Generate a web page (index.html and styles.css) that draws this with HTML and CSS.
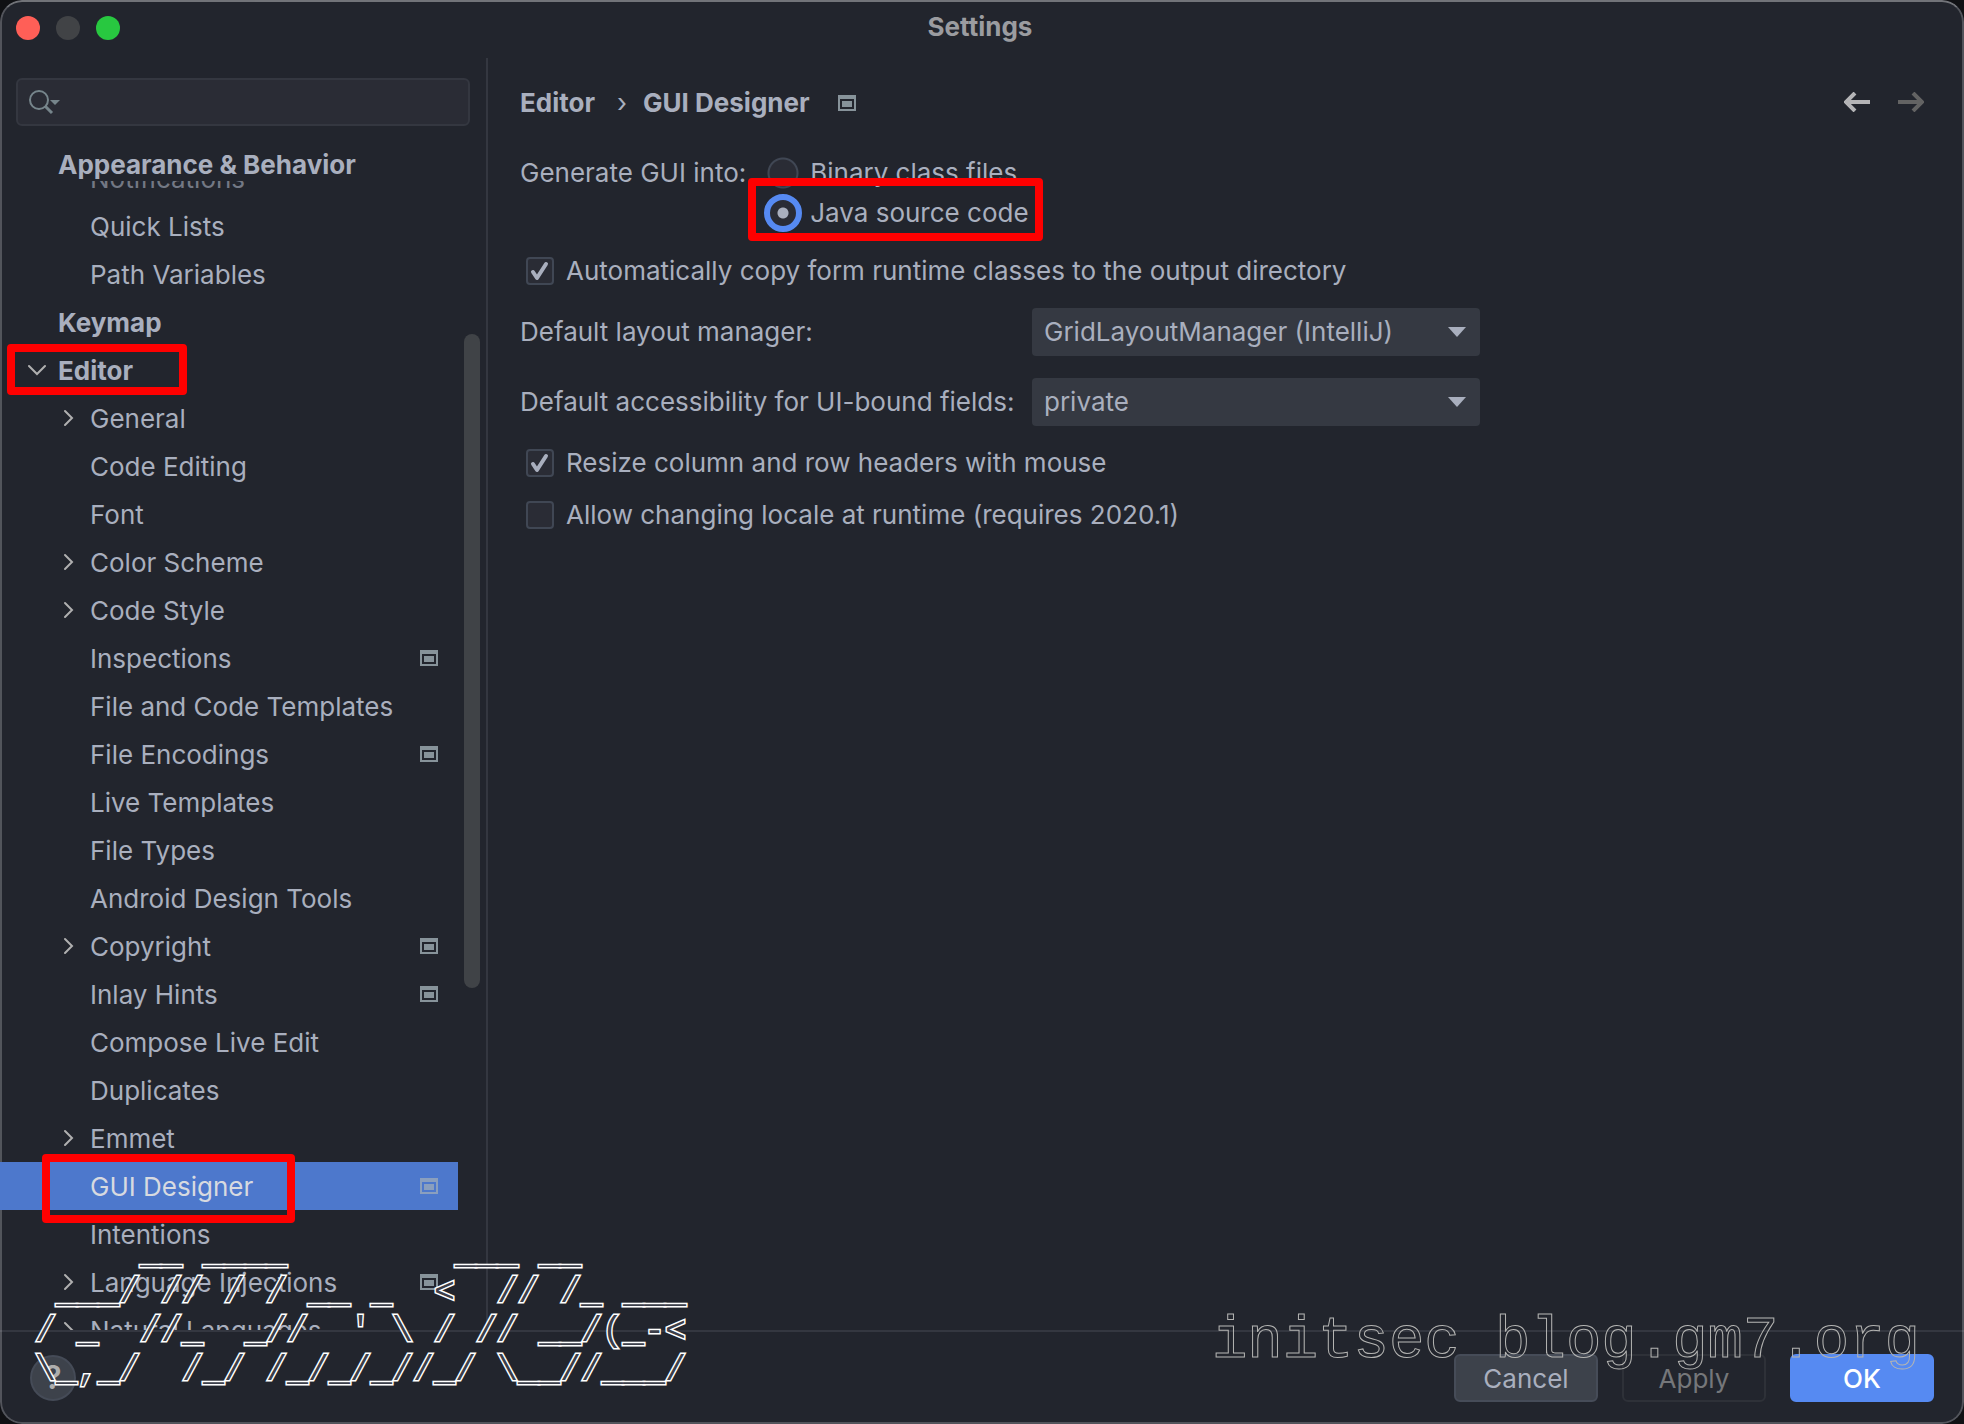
FILE: index.html
```html
<!DOCTYPE html>
<html lang="en">
<head>
<meta charset="utf-8">
<title>Settings</title>
<link rel="stylesheet" href="styles.css">
</head>
<body>
<svg class="defs" aria-hidden="true">
  <symbol id="right" viewBox="0 0 18 18"><path d="M5 2l7 7-7 7" fill="none" stroke="currentColor" stroke-width="2" stroke-linecap="round"/></symbol>
  <symbol id="down" viewBox="0 0 18 18"><path d="M1 5l8 8 8-8" fill="none" stroke="currentColor" stroke-width="2" stroke-linecap="round"/></symbol>
  <symbol id="project" viewBox="0 0 18 16"><path d="M0 0h18v16H0zM2 4v10h14V4zM4 6h10v6H4z" fill="currentColor" fill-rule="evenodd"/></symbol>
  <symbol id="check" viewBox="0 0 28 28"><path d="M7 15l4 6L20 7" fill="none" stroke="currentColor" stroke-width="4" stroke-linecap="round" stroke-linejoin="round"/></symbol>
  <symbol id="triangle" viewBox="0 0 18 10"><path d="M0 0h18l-9 10z" fill="currentColor"/></symbol>
  <symbol id="arrow" viewBox="0 0 26 20"><path d="M26 10H3M11 1L2 10l9 9" fill="none" stroke="currentColor" stroke-width="4"/></symbol>
</svg>
<div class="window">
  <header class="titlebar">
    <div class="lights"><span class="light close"></span><span class="light minimise"></span><span class="light maximise"></span></div>
    <h1>Settings</h1>
  </header>
  <div class="content">
    <aside class="sidebar">
      <label class="search">
        <svg viewBox="0 0 34 26" aria-hidden="true"><circle cx="11" cy="11" r="9" fill="none" stroke="currentColor" stroke-width="2"/><path d="M17 17l7 7" stroke="currentColor" stroke-width="3"/><path d="M22 11h10l-5 5z" fill="currentColor"/></svg>
        <input type="search" aria-label="Search settings">
      </label>
      <nav class="tree" aria-label="Settings categories">
        <a class="sticky" href="#">Appearance &amp; Behavior</a>
        <a class="row child cut" href="#"><span class="slot"></span><span class="name">Notifications</span></a>
        <a class="row child" href="#"><span class="slot"></span><span class="name">Quick Lists</span></a>
        <a class="row child" href="#"><span class="slot"></span><span class="name">Path Variables</span></a>
        <a class="row" href="#"><span class="slot"></span><span class="name">Keymap</span></a>
        <a class="row" href="#"><svg class="slot"><use href="#down"/></svg><span class="name">Editor</span><span class="mark mark-editor"></span></a>
        <a class="row child" href="#"><svg class="slot"><use href="#right"/></svg><span class="name">General</span></a>
        <a class="row child" href="#"><span class="slot"></span><span class="name">Code Editing</span></a>
        <a class="row child" href="#"><span class="slot"></span><span class="name">Font</span></a>
        <a class="row child" href="#"><svg class="slot"><use href="#right"/></svg><span class="name">Color Scheme</span></a>
        <a class="row child" href="#"><svg class="slot"><use href="#right"/></svg><span class="name">Code Style</span></a>
        <a class="row child" href="#"><span class="slot"></span><span class="name">Inspections</span><svg class="project"><use href="#project"/></svg></a>
        <a class="row child" href="#"><span class="slot"></span><span class="name">File and Code Templates</span></a>
        <a class="row child" href="#"><span class="slot"></span><span class="name">File Encodings</span><svg class="project"><use href="#project"/></svg></a>
        <a class="row child" href="#"><span class="slot"></span><span class="name">Live Templates</span></a>
        <a class="row child" href="#"><span class="slot"></span><span class="name">File Types</span></a>
        <a class="row child" href="#"><span class="slot"></span><span class="name">Android Design Tools</span></a>
        <a class="row child" href="#"><svg class="slot"><use href="#right"/></svg><span class="name">Copyright</span><svg class="project"><use href="#project"/></svg></a>
        <a class="row child" href="#"><span class="slot"></span><span class="name">Inlay Hints</span><svg class="project"><use href="#project"/></svg></a>
        <a class="row child" href="#"><span class="slot"></span><span class="name">Compose Live Edit</span></a>
        <a class="row child" href="#"><span class="slot"></span><span class="name">Duplicates</span></a>
        <a class="row child" href="#"><svg class="slot"><use href="#right"/></svg><span class="name">Emmet</span></a>
        <a class="row child selected" href="#" aria-current="page"><span class="slot"></span><span class="name">GUI Designer</span><svg class="project"><use href="#project"/></svg><span class="mark mark-designer"></span></a>
        <a class="row child" href="#"><span class="slot"></span><span class="name">Intentions</span></a>
        <a class="row child" href="#"><svg class="slot"><use href="#right"/></svg><span class="name">Language Injections</span><svg class="project"><use href="#project"/></svg></a>
        <a class="row child" href="#"><svg class="slot"><use href="#right"/></svg><span class="name">Natural Languages</span></a>
        <span class="thumb"></span>
      </nav>
    </aside>
    <main class="panel">
      <div class="crumbs">
        <h2>Editor</h2><span class="sep">›</span><h2>GUI Designer</h2>
        <svg class="project"><use href="#project"/></svg>
        <div class="history">
          <button type="button" aria-label="Back"><svg><use href="#arrow"/></svg></button>
          <button type="button" aria-label="Forward" disabled><svg class="flip"><use href="#arrow"/></svg></button>
        </div>
      </div>
      <form class="form">
        <div class="generate" role="radiogroup" aria-labelledby="generate">
          <span id="generate">Generate GUI into:</span>
          <div class="radios">
            <label class="radio"><input type="radio" name="target"><span>Binary class files</span></label>
            <label class="radio"><input type="radio" name="target" checked><span>Java source code</span></label>
            <span class="mark mark-java"></span>
          </div>
        </div>
        <label class="check first"><span class="box"><input type="checkbox" checked><svg><use href="#check"/></svg></span><span>Automatically copy form runtime classes to the output directory</span></label>
        <div class="fields">
          <label for="layout">Default layout manager:</label>
          <div class="select"><select id="layout"><option>GridLayoutManager (IntelliJ)</option></select><svg><use href="#triangle"/></svg></div>
          <label for="access">Default accessibility for UI-bound fields:</label>
          <div class="select"><select id="access"><option>private</option></select><svg><use href="#triangle"/></svg></div>
        </div>
        <label class="check"><span class="box"><input type="checkbox" checked><svg><use href="#check"/></svg></span><span>Resize column and row headers with mouse</span></label>
        <label class="check"><span class="box"><input type="checkbox"><svg><use href="#check"/></svg></span><span>Allow changing locale at runtime (requires 2020.1)</span></label>
      </form>
    </main>
  </div>
  <footer class="footer">
    <button class="help" type="button" aria-label="Help">?</button>
    <button class="btn cancel" type="button">Cancel</button>
    <button class="btn apply" type="button" disabled>Apply</button>
    <button class="btn ok" type="button">OK</button>
  </footer>
  <pre class="banner">     __ ____        ___ __
 ___/ // / / __ _  &lt;  // /_ ___
/ _  //_  _//  ' \ / // __/(_-&lt;
\_,_/  /_/ /_/_/_//_/ \__//___/</pre>
  <div class="signature">initsec blog.gm7.org</div>
</div>
</body>
</html>
```
FILE: styles.css
```css
:root {
  --bg: #22252d;
  --text: #a9afbe;
  --line: #343740;
  --field: #2a2c35;
  --edge: #404754;
  --accent: #568af2;
}
* { box-sizing: border-box; }
body {
  margin: 0;
  background: #101114;
  color: var(--text);
  font: 26px/32px Inter, "Liberation Sans", sans-serif;
}
button, input, select { font: inherit; color: inherit; margin: 0; }
a { color: inherit; text-decoration: none; }
h1, h2 { margin: 0; font-size: 26px; font-weight: 700; }
.defs { display: none; }

.window {
  position: relative;
  display: flex;
  flex-direction: column;
  height: 100vh;
  background: var(--bg);
  border-radius: 22px;
  overflow: hidden;
}
.window::after {
  content: "";
  position: absolute;
  inset: 0;
  border: 2px solid rgba(255, 255, 255, .22);
  border-top-color: rgba(255, 255, 255, .36);
  border-radius: 22px;
  pointer-events: none;
}

.titlebar {
  display: grid;
  grid-template-columns: 1fr auto 1fr;
  align-items: center;
  height: 58px;
  padding: 0 20px 4px 16px;
}
.titlebar h1 { color: #9b9ca0; }
.lights { display: flex; gap: 16px; padding-top: 2px; }
.light { width: 24px; height: 24px; border-radius: 50%; }
.close { background: #ff5f57; }
.minimise { background: #414346; }
.maximise { background: #28c840; }

.content { flex: 1; min-height: 0; display: flex; }
.sidebar {
  flex: none;
  width: 488px;
  display: flex;
  flex-direction: column;
  padding-top: 20px;
  border-right: 2px solid var(--line);
}
.search {
  display: flex;
  align-items: center;
  gap: 8px;
  height: 48px;
  margin: 0 16px 15px;
  padding: 0 10px;
  background: var(--field);
  border: 2px solid var(--line);
  border-radius: 6px;
}
.search svg { flex: none; width: 34px; height: 26px; color: #76858b; }
.search input { flex: 1; min-width: 0; border: 0; outline: 0; background: none; }

.tree { position: relative; flex: 1; min-height: 0; overflow: hidden; }
.sticky { display: block; height: 40px; padding-left: 58px; line-height: 48px; font-weight: 700; }
.row {
  position: relative;
  display: flex;
  align-items: center;
  gap: 12px;
  height: 48px;
  margin-right: 28px;
  padding: 0 20px 0 28px;
  font-weight: 700;
}
.child { padding-left: 60px; font-weight: 400; }
.cut { height: 21px; align-items: flex-end; overflow: hidden; opacity: .6; }
.cut .name { line-height: 46px; }
.name { flex: 1; padding-top: 2px; white-space: nowrap; }
.slot { flex: none; width: 18px; height: 18px; color: #b0b0b0; }
.project { flex: none; width: 18px; height: 16px; color: #87939a; }
.selected { background: #4d78cc; color: #d7dae0; z-index: 1; }
.selected .project { color: #8a9fbe; }
.thumb {
  position: absolute;
  top: 193px;
  right: 6px;
  width: 16px;
  height: 654px;
  border-radius: 8px;
  background: #404347;
}

.mark { position: absolute; z-index: 1; border: 8px solid #f00; border-radius: 4px; pointer-events: none; }
.mark-editor { left: 7px; top: -2px; width: 180px; height: 51px; }
.mark-designer { left: 42px; top: -8px; width: 253px; height: 69px; }
.mark-java { left: -16px; top: 25px; width: 295px; height: 63px; }

.panel { flex: 1; min-width: 0; padding: 20px 52px 0 32px; }
.crumbs { display: flex; align-items: center; height: 50px; }
.sep { padding: 0 16px 0 22px; }
.crumbs .project { margin-left: 28px; }
.history { display: flex; gap: 28px; margin-left: auto; margin-right: -12px; padding-bottom: 2px; }
.history button { display: flex; padding: 0; border: 0; background: none; color: #b4b4b6; }
.history button:disabled { color: #636363; }
.history svg { width: 26px; height: 20px; }
.history .flip { transform: scaleX(-1); }

.form { padding-top: 25px; }
.generate { display: flex; gap: 18px; }
.generate > span { line-height: 40px; }
.radios { position: relative; }
.radio { display: flex; align-items: center; gap: 8px; height: 40px; white-space: nowrap; }
.radio input {
  appearance: none;
  width: 38px;
  height: 38px;
  background: radial-gradient(circle, var(--field) 13px, var(--edge) 14px, var(--edge) 15px, transparent 16px);
}
.radio input:checked {
  border: 6px solid var(--accent);
  border-radius: 50%;
  background: radial-gradient(circle, var(--text) 5px, var(--field) 6px);
}
.check { display: flex; align-items: center; gap: 12px; height: 52px; padding-left: 6px; }
.check.first { margin-top: 12px; }
.box { display: grid; width: 28px; height: 28px; }
.box > * { grid-area: 1 / 1; width: 28px; height: 28px; }
.box input { appearance: none; background: var(--field); border: 2px solid var(--edge); border-radius: 4px; }
.box svg { visibility: hidden; pointer-events: none; }
.box input:checked + svg { visibility: visible; }
.fields {
  display: grid;
  grid-template-columns: 512px minmax(0, 448px);
  row-gap: 22px;
  align-items: center;
  padding: 11px 0;
}
.select { display: grid; align-items: center; }
.select > * { grid-area: 1 / 1; }
.select select {
  appearance: none;
  width: 100%;
  height: 48px;
  padding: 0 12px;
  border: 0;
  border-radius: 4px;
  background: #353942;
}
.select svg { justify-self: end; width: 18px; height: 10px; margin-right: 14px; pointer-events: none; }

.footer {
  display: flex;
  align-items: center;
  gap: 24px;
  height: 94px;
  border-top: 2px solid var(--line);
  padding: 0 30px;
}
.help {
  width: 46px;
  height: 46px;
  margin-right: auto;
  padding: 0;
  border: 2px solid #454b57;
  border-radius: 50%;
  background: #3d424b;
  color: #adadad;
  font-size: 32px;
  font-weight: 600;
}
.btn { width: 144px; height: 48px; padding: 2px 0 0; border: 2px solid #464c58; border-radius: 6px; }
.cancel { background: #3d424b; }
.apply { background: none; border-color: #2e3138; color: #75777a; }
.ok { background: var(--accent); border-color: var(--accent); color: #fff; font-weight: 500; }

.banner, .signature {
  position: absolute;
  margin: 0;
  font-family: "Liberation Mono", monospace;
  white-space: pre;
  pointer-events: none;
}
.banner {
  left: 35px;
  bottom: 33px;
  font-size: 35px;
  line-height: 39px;
  color: #3c3f4a;
  -webkit-text-stroke: 3px #fff;
  paint-order: stroke fill;
}
.signature {
  right: 44px;
  bottom: 50px;
  font-size: 59px;
  line-height: 64px;
  color: transparent;
  -webkit-text-stroke: 1px #b4b4b2;
}
```
